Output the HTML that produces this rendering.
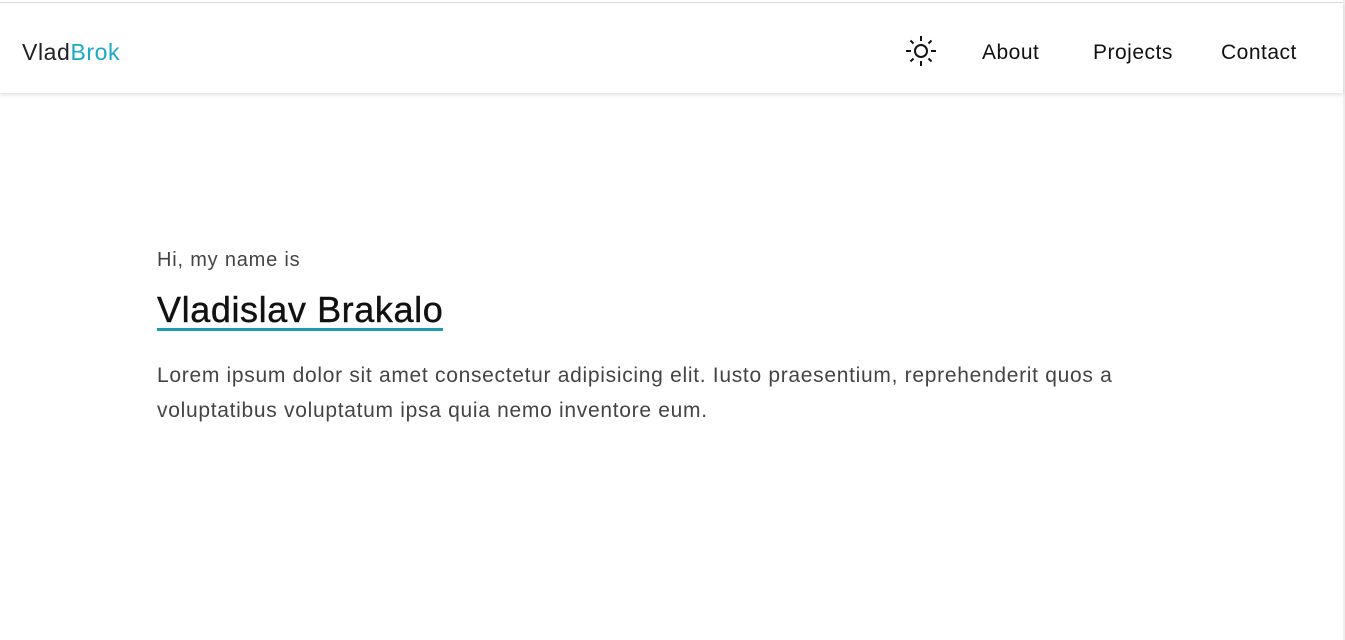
<!DOCTYPE html>
<html><head><style>
html,body{margin:0;padding:0;width:1345px;height:640px;overflow:hidden;background:#fff;font-family:"Liberation Sans",sans-serif;}
.top{position:absolute;left:0;top:2px;width:1343px;height:1px;background:#ddd}
.rb{position:absolute;left:1343px;top:0;width:2px;height:640px;background:#eee}
header{position:absolute;left:0;top:3px;width:1343px;height:90px;background:#fff;box-shadow:0 2px 4px rgba(0,0,0,.12)}
.logo{position:absolute;left:22px;top:36px;font-size:23px;color:#222;letter-spacing:0.6px}
.logo span{color:#1aa9c4}
.nav{position:absolute;top:38px;font-size:21px;color:#111;letter-spacing:0.5px}
.hi{position:absolute;left:157px;top:249px;font-size:20px;color:#444;letter-spacing:0.8px}
h1{position:absolute;left:157px;top:291px;margin:0;font-size:36px;font-weight:normal;color:#111;border-bottom:3px solid #1a9bb0;line-height:37px;letter-spacing:0.6px;-webkit-text-stroke:0.4px #111}
p{position:absolute;left:157px;top:358px;margin:0;width:1100px;font-size:21px;line-height:35px;color:#444;letter-spacing:0.7px}
</style></head><body>
<div class="top"></div><div class="rb"></div>
<header>
<div class="logo">Vlad<span>Brok</span></div>
<svg style="position:absolute;left:905px;top:32px" width="32" height="32" viewBox="0 0 32 32" fill="none" stroke="#111" stroke-width="2">
<circle cx="16" cy="16" r="6"/>
<path d="M16 1v5M16 26v5M1 16h5M26 16h5M5.5 5.5l3 3M23.5 23.5l3 3M5.5 26.5l3-3M23.5 8.5l3-3"/>
</svg>
<div class="nav" style="left:982px">About</div>
<div class="nav" style="left:1093px">Projects</div>
<div class="nav" style="left:1221px">Contact</div>
</header>
<div class="hi">Hi, my name is</div>
<h1>Vladislav Brakalo</h1>
<p>Lorem ipsum dolor sit amet consectetur adipisicing elit. Iusto praesentium, reprehenderit quos a<br>voluptatibus voluptatum ipsa quia nemo inventore eum.</p>
</body></html>
